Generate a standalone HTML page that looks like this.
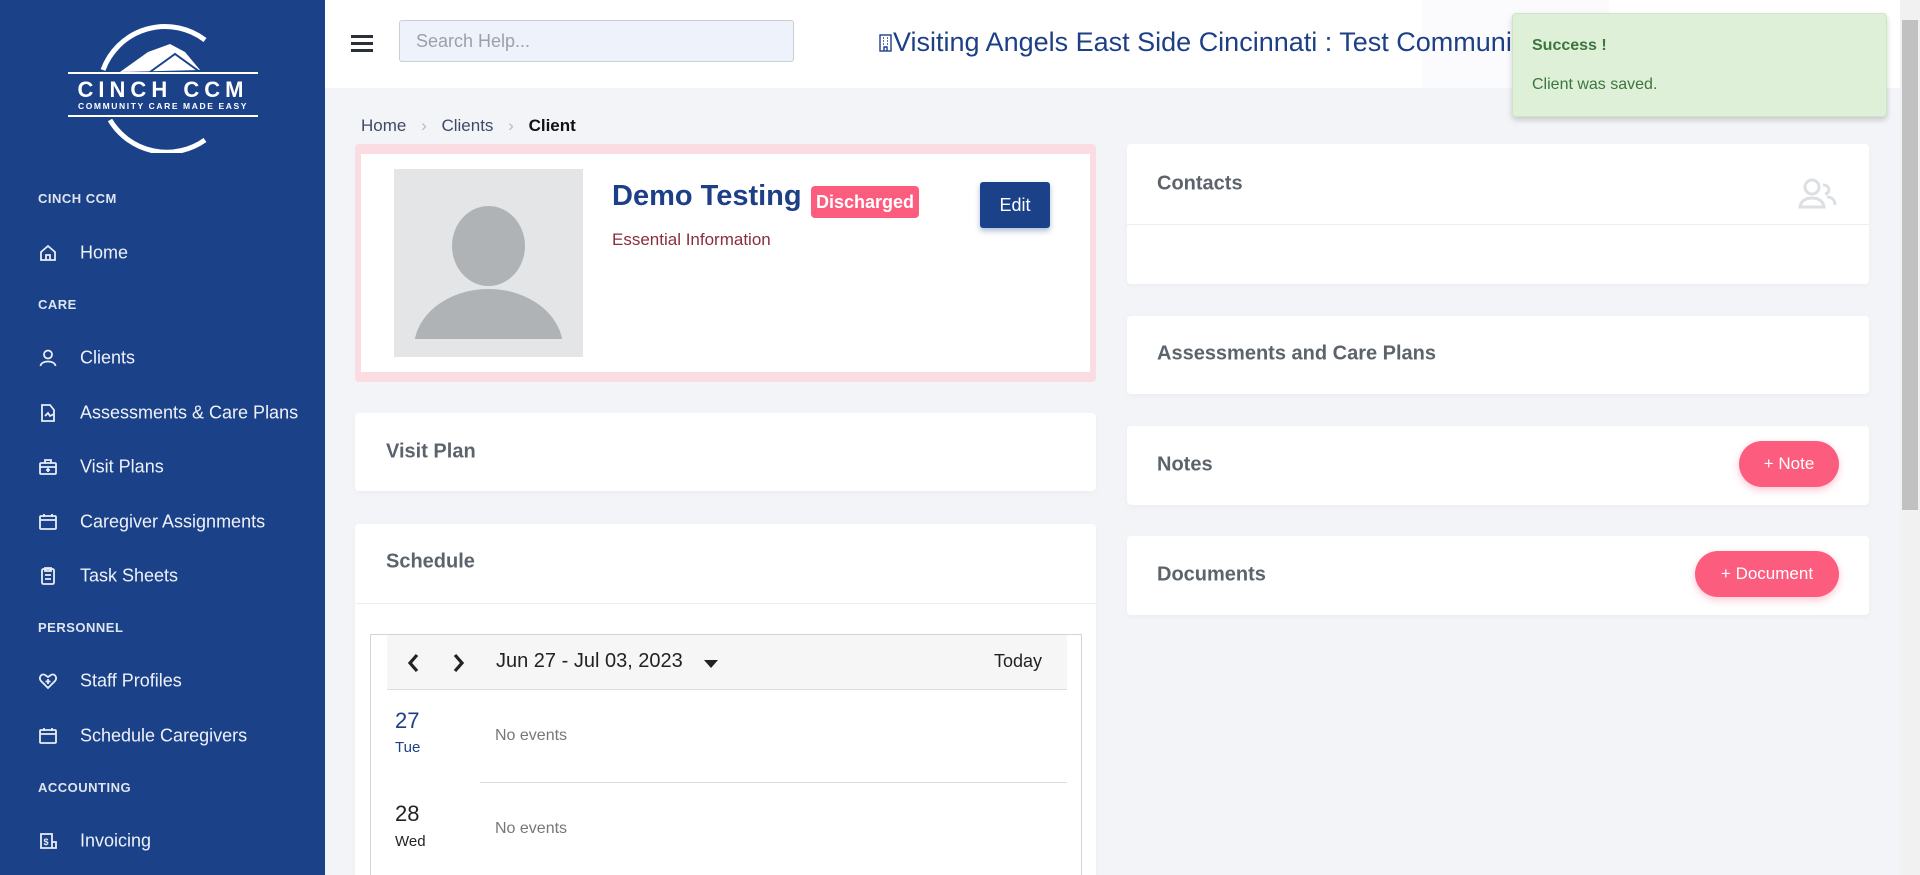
<!DOCTYPE html>
<html><head><meta charset="utf-8"><style>
*{box-sizing:border-box;margin:0;padding:0}
html,body{width:1920px;height:875px;overflow:hidden}
body{background:#f3f4f8;font-family:"Liberation Sans",sans-serif;position:relative}
.abs{position:absolute}
#sb{left:0;top:0;width:325px;height:875px;background:#1b4289;color:#e9edf5}
.sec{position:absolute;left:38px;font-size:13px;font-weight:bold;letter-spacing:.5px;color:#dfe5f0}
.nav{position:absolute;left:80px;font-size:18px;color:#eef1f7;transform:translateY(-50%)}
.ic{position:absolute;left:38px;width:20px;height:20px;transform:translateY(-50%)}
.card{position:absolute;background:#fff;border-radius:4px;box-shadow:0 2px 6px rgba(0,0,0,.03)}
.ct{position:absolute;font-size:20px;font-weight:bold;color:#5c636b;transform:translateY(-50%)}
.pill{position:absolute;background:#fc5c7d;color:#fff;border-radius:24px;font-size:17px;display:flex;align-items:center;justify-content:center;box-shadow:0 3px 8px rgba(252,92,125,.35)}
</style></head><body>
<div id="sb" class="abs">
<svg class="abs" style="left:60px;top:18px" width="200" height="135" viewBox="60 18 200 135">
<path d="M205 40 A66 66 0 0 0 103 70" stroke="#fff" stroke-width="5" fill="none"/>
<path d="M110 120 A66 66 0 0 0 205 140" stroke="#fff" stroke-width="5" fill="none"/>
<path d="M120 72 L148 52 L170 44 L185 52 L200 70 Z" fill="#fff"/>
<path d="M150 72 L175 54 L200 72" stroke="#1b4289" stroke-width="2" fill="none"/>
<line x1="68" y1="73" x2="258" y2="73" stroke="#fff" stroke-width="2"/>
<line x1="68" y1="116" x2="258" y2="116" stroke="#fff" stroke-width="2"/>
<text x="163" y="97" text-anchor="middle" fill="#fff" font-size="22" font-weight="bold" letter-spacing="5" font-family="Liberation Sans">CINCH CCM</text>
<text x="163" y="109" text-anchor="middle" fill="#fff" font-size="8.5" font-weight="bold" letter-spacing="1.6" font-family="Liberation Sans">COMMUNITY CARE MADE EASY</text>
</svg>
<div class="sec" style="top:191px">CINCH CCM</div>
<div class="sec" style="top:297px">CARE</div>
<div class="sec" style="top:620px">PERSONNEL</div>
<div class="sec" style="top:780px">ACCOUNTING</div>
<svg class="ic" style="top:253px" viewBox="0 0 20 20" fill="none" stroke="#e9edf5" stroke-width="1.8"><path d="M3 9 L10 3 L17 9 V17 H3 Z M8 17 V12 H12 V17"/></svg>
<div class="nav" style="top:253px">Home</div>
<svg class="ic" style="top:358px" viewBox="0 0 20 20" fill="none" stroke="#e9edf5" stroke-width="1.8"><circle cx="10" cy="6.5" r="4"/><path d="M2.5 18 C3 12 17 12 17.5 18"/></svg>
<div class="nav" style="top:358px">Clients</div>
<svg class="ic" style="top:413px" viewBox="0 0 20 20" fill="none" stroke="#e9edf5" stroke-width="1.8"><path d="M12 2 H4 V18 H16 V7 Z M7 13 L10 10 L12 13 L16 11"/></svg>
<div class="nav" style="top:413px">Assessments &amp; Care Plans</div>
<svg class="ic" style="top:467px" viewBox="0 0 20 20" fill="none" stroke="#e9edf5" stroke-width="1.8"><rect x="2" y="6" width="16" height="11" rx="1"/><path d="M7 6 V3 H13 V6 M2 10 H18 M10 11 V15 M8 13 H12"/></svg>
<div class="nav" style="top:467px">Visit Plans</div>
<svg class="ic" style="top:522px" viewBox="0 0 20 20" fill="none" stroke="#e9edf5" stroke-width="1.8"><rect x="2" y="4" width="16" height="13" rx="1"/><path d="M2 8 H18 M6 2 V5 M14 2 V5"/></svg>
<div class="nav" style="top:522px">Caregiver Assignments</div>
<svg class="ic" style="top:576px" viewBox="0 0 20 20" fill="none" stroke="#e9edf5" stroke-width="1.8"><rect x="4" y="3" width="12" height="15" rx="1.5"/><path d="M7 2 H13 V5 H7 Z M7 9 H13 M7 13 H13"/></svg>
<div class="nav" style="top:576px">Task Sheets</div>
<svg class="ic" style="top:681px" viewBox="0 0 20 20" fill="none" stroke="#e9edf5" stroke-width="1.8"><path d="M10 17 L3 10 C0 6 4 2 7 4 L10 6 L13 4 C16 2 20 6 17 10 Z M10 8 V13 M7.5 10.5 H12.5"/></svg>
<div class="nav" style="top:681px">Staff Profiles</div>
<svg class="ic" style="top:736px" viewBox="0 0 20 20" fill="none" stroke="#e9edf5" stroke-width="1.8"><rect x="2" y="4" width="16" height="13" rx="1"/><path d="M2 8 H18 M6 2 V5 M14 2 V5"/></svg>
<div class="nav" style="top:736px">Schedule Caregivers</div>
<svg class="ic" style="top:841px" viewBox="0 0 20 20" fill="none" stroke="#e9edf5" stroke-width="1.8"><path d="M3 3 H14 V17 H3 Z M14 11 H18 V17 H14"/><text x="5.5" y="14" font-size="9" fill="#e9edf5" stroke="none" font-weight="bold">$</text></svg>
<div class="nav" style="top:841px">Invoicing</div>
</div>

<div class="abs" style="left:325px;top:0;width:1575px;height:88px;background:#fff"></div>
<div class="abs" style="left:1422px;top:0;width:187px;height:88px;background:#fbfbfd"></div>
<div class="abs" style="left:351px;top:35px;width:22px;height:3px;background:#2b3036;box-shadow:0 7px 0 #2b3036,0 14px 0 #2b3036"></div>
<div class="abs" style="left:399px;top:20px;width:395px;height:42px;background:#eef2fa;border:1px solid #c9ced6;border-radius:3px;font-size:18px;color:#9aa1ab;padding:10px 16px">Search Help...</div>
<svg class="abs" style="left:879px;top:34px" width="13" height="18" viewBox="0 0 13 18" fill="none" stroke="#1d3f87" stroke-width="1.4"><rect x="1" y="1" width="11" height="16"/><path d="M4 4h1M8 4h1M4 7h1M8 7h1M4 10h1M8 10h1M5 17v-4h3v4"/></svg>
<div class="abs" style="left:893px;top:27px;font-size:27px;color:#1d3f87;white-space:nowrap">Visiting Angels East Side Cincinnati : Test Community</div>

<div class="abs" style="left:1512px;top:13px;width:375px;height:104px;background:#dff0d8;border:1px solid #cfe5c4;border-radius:4px;box-shadow:0 3px 6px rgba(0,0,0,.18)">
<div class="abs" style="left:19px;top:23px;font-size:16px;font-weight:bold;color:#3c763d">Success !</div>
<div class="abs" style="left:19px;top:62px;font-size:16px;color:#3c763d">Client was saved.</div>
</div>

<div class="abs" style="left:1900px;top:0;width:20px;height:875px;background:#f1f1f1"></div>
<div class="abs" style="left:1902px;top:20px;width:16px;height:490px;background:#c1c1c1"></div>

<div class="abs" style="left:361px;top:116px;font-size:17px;color:#3c4a66">Home <span style="color:#b5bac2;margin:0 10px">›</span> Clients <span style="color:#b5bac2;margin:0 10px">›</span> <b style="color:#111">Client</b></div>

<div class="abs" style="left:355px;top:144px;width:741px;height:238px;background:#fbdce2;border-radius:4px"></div>
<div class="abs" style="left:361px;top:154px;width:729px;height:218px;background:#fff"></div>
<div class="abs" style="left:394px;top:169px;width:189px;height:188px;background:#e4e5e7;overflow:hidden">
<div class="abs" style="left:58px;top:37px;width:73px;height:80px;border-radius:50%;background:#afb3b6"></div>
<div class="abs" style="left:20px;top:120px;width:149px;height:118px;border-radius:50%;background:#afb3b6"></div>
<div class="abs" style="left:0;top:170px;width:189px;height:20px;background:#e4e5e7"></div>
</div>
<div class="abs" style="left:612px;top:180px;font-size:29px;font-weight:bold;color:#1d3f87">Demo Testing</div>
<div class="abs" style="left:811px;top:186px;width:108px;height:32px;background:#fc5c7d;border-radius:4px;color:#fff;font-size:18px;font-weight:bold;text-align:center;line-height:32px">Discharged</div>
<div class="abs" style="left:612px;top:230px;font-size:17px;color:#8b2d3c">Essential Information</div>
<div class="abs" style="left:980px;top:182px;width:70px;height:46px;background:#1b4289;border-radius:3px;color:#fff;font-size:18px;text-align:center;line-height:46px;box-shadow:0 3px 6px rgba(27,66,137,.35)">Edit</div>

<div class="card" style="left:355px;top:413px;width:741px;height:78px"><div class="ct" style="left:31px;top:39px">Visit Plan</div></div>
<div class="card" style="left:355px;top:524px;width:741px;height:351px;border-radius:4px 4px 0 0">
<div class="ct" style="left:31px;top:38px">Schedule</div>
<div class="abs" style="left:0;top:79px;width:741px;height:1px;background:#eceef2"></div>
<div class="abs" style="left:15px;top:110px;width:712px;height:260px;border:1px solid #d4d4d4;border-bottom:none">
<div class="abs" style="left:16px;top:0;width:680px;height:55px;background:#f6f6f6;border-bottom:1px solid #ddd">
<svg class="abs" style="left:20px;top:18px" width="14" height="20" viewBox="0 0 14 20"><path d="M10 2 L3 10 L10 18" stroke="#222" stroke-width="3.2" fill="none"/></svg>
<svg class="abs" style="left:64px;top:18px" width="14" height="20" viewBox="0 0 14 20"><path d="M4 2 L11 10 L4 18" stroke="#222" stroke-width="3.2" fill="none"/></svg>
<div class="abs" style="left:109px;top:15px;font-size:20px;color:#222">Jun 27 - Jul 03, 2023</div>
<div class="abs" style="left:317px;top:25px;width:0;height:0;border-left:7px solid transparent;border-right:7px solid transparent;border-top:8px solid #222"></div>
<div class="abs" style="left:607px;top:16px;font-size:18px;color:#222">Today</div>
</div>
<div class="abs" style="left:24px;top:73px;font-size:22px;color:#1d3f87">27</div>
<div class="abs" style="left:24px;top:104px;font-size:15px;color:#1d3f87">Tue</div>
<div class="abs" style="left:124px;top:92px;font-size:16px;color:#777">No events</div>
<div class="abs" style="left:109px;top:147px;width:587px;height:1px;background:#ddd"></div>
<div class="abs" style="left:24px;top:166px;font-size:22px;color:#222">28</div>
<div class="abs" style="left:24px;top:198px;font-size:15px;color:#222">Wed</div>
<div class="abs" style="left:124px;top:185px;font-size:16px;color:#777">No events</div>
</div>
</div>

<div class="card" style="left:1127px;top:144px;width:742px;height:140px">
<div class="ct" style="left:30px;top:40px">Contacts</div>
<svg class="abs" style="left:670px;top:33px" width="42" height="32" viewBox="0 0 42 32" fill="none" stroke="#dcdfe3" stroke-width="3"><circle cx="15" cy="10" r="7"/><path d="M3 30 C4 18 26 18 27 30 Z"/><path d="M26 8 C33 8 34 16 28 17 M30 20 C36 20 38 24 38 28"/></svg>
<div class="abs" style="left:0;top:80px;width:742px;height:1px;background:#eceef2"></div>
</div>
<div class="card" style="left:1127px;top:316px;width:742px;height:78px"><div class="ct" style="left:30px;top:38px">Assessments and Care Plans</div></div>
<div class="card" style="left:1127px;top:426px;width:742px;height:79px"><div class="ct" style="left:30px;top:39px">Notes</div>
<div class="pill" style="left:612px;top:15px;width:100px;height:46px">+ Note</div></div>
<div class="card" style="left:1127px;top:536px;width:742px;height:79px"><div class="ct" style="left:30px;top:39px">Documents</div>
<div class="pill" style="left:568px;top:15px;width:144px;height:46px">+ Document</div></div>
</body></html>
